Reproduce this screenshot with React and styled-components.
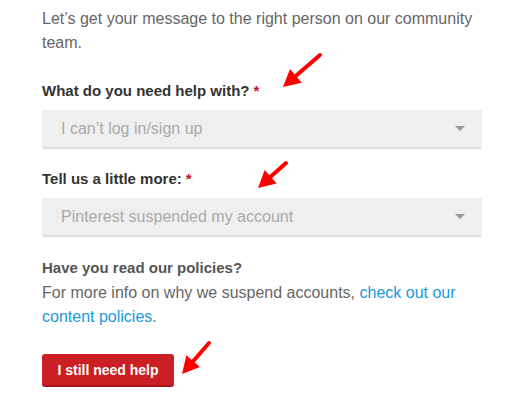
import React from "react";
import styled, { createGlobalStyle } from "styled-components";

const GlobalStyle = createGlobalStyle`
  html, body {
    margin: 0;
    padding: 0;
    background: #fff;
  }
  body {
    font-family: "Liberation Sans", Arial, sans-serif;
  }
`;

const Page = styled.div`
  width: 518px;
  height: 418px;
  padding: 7px 36px 0 42px;
  box-sizing: border-box;
  display: flex;
  flex-direction: column;
  position: relative;
  overflow: hidden;
`;

const Intro = styled.p`
  margin: 0;
  font-size: 16px;
  line-height: 24px;
  color: #666;
`;

const Label = styled.div`
  margin-top: ${(p) => p.$top || 0}px;
  font-size: 15px;
  line-height: 20px;
  font-weight: bold;
  color: #333;
`;

const Star = styled.span`
  color: #c8102e;
  margin-left: 4px;
`;

const Select = styled.div`
  margin-top: ${(p) => p.$top || 0}px;
  height: 37px;
  background: #efefef;
  border-bottom: 2px solid #e0e0e0;
  border-radius: 2px;
  display: flex;
  align-items: center;
  justify-content: space-between;
  padding: 0 17px 0 19px;
  font-size: 16px;
  color: #aaa;
`;

const Caret = styled.span`
  width: 0;
  height: 0;
  border-left: 5px solid transparent;
  border-right: 5px solid transparent;
  border-top: 5px solid #999;
`;

const Question = styled.div`
  margin-top: 20px;
  font-size: 15px;
  line-height: 22px;
  font-weight: bold;
  color: #555;
`;

const Info = styled.p`
  margin: 2px 0 0;
  font-size: 16px;
  line-height: 24px;
  color: #666;
`;

const Link = styled.a`
  color: #1a9ad9;
  text-decoration: none;
`;

const Button = styled.button`
  align-self: flex-start;
  margin-top: 25px;
  width: 132px;
  height: 33px;
  background: #cb1f24;
  border: none;
  border-bottom: 2px solid #a5151a;
  border-radius: 3px;
  color: #fff;
  font-family: inherit;
  font-size: 14px;
  font-weight: bold;
  padding: 0;
`;

const Overlay = styled.svg`
  position: absolute;
  left: 0;
  top: 0;
  pointer-events: none;
`;

// annotation arrows: tail -> tip, in page pixels
const arrows = [
  { tail: [320, 55], tip: [283, 87] },
  { tail: [286, 163], tip: [258, 188] },
  { tail: [209, 343], tip: [182, 374] },
];

function arrowShape({ tail, tip }, i) {
  const dx = tail[0] - tip[0];
  const dy = tail[1] - tip[1];
  const len = Math.hypot(dx, dy);
  const ux = dx / len;
  const uy = dy / len;
  const headLen = 17;
  const half = 9;
  const bx = tip[0] + ux * headLen;
  const by = tip[1] + uy * headLen;
  const p1 = [bx - uy * half, by + ux * half];
  const p2 = [bx + uy * half, by - ux * half];
  return (
    <g key={i}>
      <line
        x1={tail[0]}
        y1={tail[1]}
        x2={bx - ux * 2}
        y2={by - uy * 2}
        stroke="#ff0000"
        strokeWidth="4"
        strokeLinecap="round"
      />
      <polygon points={`${tip.join(",")} ${p1.join(",")} ${p2.join(",")}`} fill="#ff0000" />
    </g>
  );
}

export default function App() {
  return (
    <>
      <GlobalStyle />
      <Page>
        <Intro>
          Let’s get your message to the right person on our community team.
        </Intro>
        <Label $top={26}>
          What do you need help with?<Star>*</Star>
        </Label>
        <Select $top={9}>
          I can’t log in/sign up
          <Caret />
        </Select>
        <Label $top={20}>
          Tell us a little more:<Star>*</Star>
        </Label>
        <Select $top={9}>
          Pinterest suspended my account
          <Caret />
        </Select>
        <Question>Have you read our policies?</Question>
        <Info>
          For more info on why we suspend accounts,{" "}
          <Link href="#">check out our content policies</Link>.
        </Info>
        <Button>I still need help</Button>
        <Overlay width="518" height="418">
          {arrows.map(arrowShape)}
        </Overlay>
      </Page>
    </>
  );
}
